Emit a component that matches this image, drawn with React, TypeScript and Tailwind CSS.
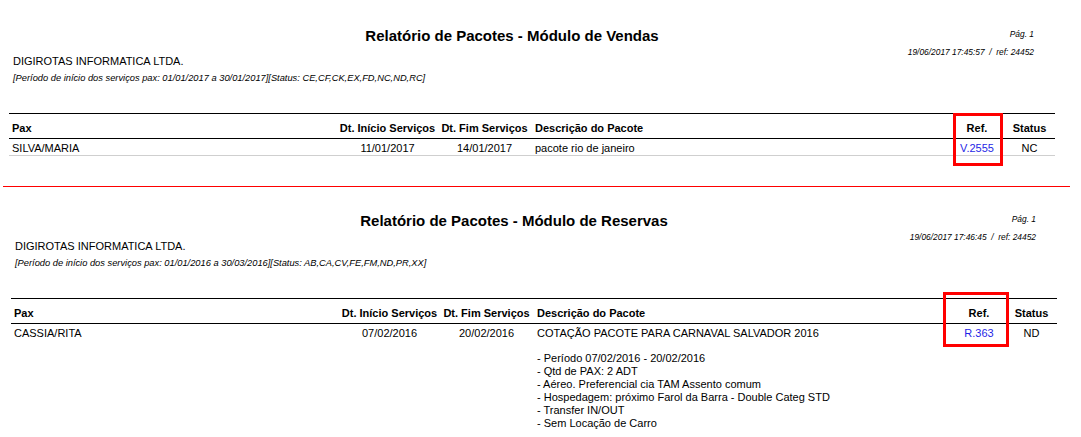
const sections = [
    {
        title: "Relatório de Pacotes - Módulo de Vendas",
        stamp: "19/06/2017 17:45:57  /  ref: 24452",
        filter: "[Período de início dos serviços pax: 01/01/2017 a 30/01/2017][Status: CE,CF,CK,EX,FD,NC,ND,RC]",
        row: {
            pax: "SILVA/MARIA",
            start: "11/01/2017",
            end: "14/01/2017",
            desc: "pacote rio de janeiro",
            details: [] as string[],
            ref: "V.2555",
            status: "NC",
        },
    },
    {
        title: "Relatório de Pacotes - Módulo de Reservas",
        stamp: "19/06/2017 17:46:45  /  ref: 24452",
        filter: "[Período de início dos serviços pax: 01/01/2016 a 30/03/2016][Status: AB,CA,CV,FE,FM,ND,PR,XX]",
        row: {
            pax: "CASSIA/RITA",
            start: "07/02/2016",
            end: "20/02/2016",
            desc: "COTAÇÃO PACOTE PARA CARNAVAL SALVADOR 2016",
            details: [
                "- Período 07/02/2016 - 20/02/2016",
                "- Qtd de PAX: 2 ADT",
                "- Aéreo. Preferencial cia TAM Assento comum",
                "- Hospedagem: próximo Farol da Barra - Double Categ STD",
                "- Transfer IN/OUT",
                "- Sem Locação de Carro",
            ],
            ref: "R.363",
            status: "ND",
        },
    },
];

type Section = (typeof sections)[number];

function Report({ data, second }: { data: Section; second: boolean }) {
    const { row } = data;
    return (
        <section className={second ? "ml-[2px] pt-[25px]" : "pt-[27px]"}>
            {/* Title + page stamp */}
            <div className="grid w-[1034px]">
                <h1 className="col-start-1 row-start-1 w-[1024px] text-center text-[15px] leading-[18px] font-bold text-black">
                    {data.title}
                </h1>
                <div className="col-start-1 row-start-1 justify-self-end text-right italic text-[8.4px] text-black pt-[1px]">
                    <p className="leading-[12px]">Pág. 1</p>
                    <p className="leading-[10px] mt-[7px] whitespace-pre">{data.stamp}</p>
                </div>
            </div>

            <p className="pl-[13px] mt-[-1px] text-[11px] leading-[10px] text-black">DIGIROTAS INFORMATICA LTDA.</p>
            <p className="pl-[13px] mt-[6px] text-[9.3px] leading-[12px] italic text-black">{data.filter}</p>

            {/* Table */}
            <div className="relative ml-[9px] mt-[29px] w-[1046px] text-[11px] text-black">
                <div className="flex border-t border-b border-black font-bold leading-[13px] pt-[8px] pb-[3px]">
                    <div className="w-[329px] pl-[3px]">Pax</div>
                    <div className="w-[99px] text-center whitespace-nowrap">Dt. Início Serviços</div>
                    <div className="w-[95px] text-center whitespace-nowrap">Dt. Fim Serviços</div>
                    <div className="w-[418px] pl-[3px]">Descrição do Pacote</div>
                    <div className="w-[54px] text-center">Ref.</div>
                    <div className="w-[51px] text-center">Status</div>
                </div>
                <div
                    className={
                        "flex leading-[13px] pt-[3px] pb-0 " +
                        (second ? "" : "border-b border-[#cfcfcf]")
                    }
                >
                    <div className="w-[329px] pl-[3px]">{row.pax}</div>
                    <div className="w-[99px] text-center">{row.start}</div>
                    <div className="w-[95px] text-center">{row.end}</div>
                    <div className="w-[418px] pl-[3px]">
                        <p>{row.desc}</p>
                        {row.details.length > 0 && (
                            <div className="mt-[12px]">
                                {row.details.map((line) => (
                                    <p key={line} className="whitespace-nowrap">
                                        {line}
                                    </p>
                                ))}
                            </div>
                        )}
                    </div>
                    <div className="w-[54px] text-center text-[#1f1fe6]">{row.ref}</div>
                    <div className="w-[51px] text-center">{row.status}</div>
                </div>

                {/* highlight around Ref column */}
                {second ? (
                    <div className="absolute left-[932px] top-[-6px] w-[66px] h-[55px] border-[3px] border-[#ff0000]" />
                ) : (
                    <div className="absolute left-[944px] top-0 w-[50px] h-[53px] border-[3px] border-[#ff0000]" />
                )}
            </div>
        </section>
    );
}

export default function App() {
    return (
        <div
            className="w-[1081px] h-[437px] overflow-hidden bg-white"
            style={{ fontFamily: '"Liberation Sans", Arial, sans-serif' }}
        >
            <Report data={sections[0]} second={false} />
            <div className="ml-[3px] mt-[30px] w-[1067px] h-px bg-[#ff0000]" />
            <Report data={sections[1]} second={true} />
        </div>
    );
}
